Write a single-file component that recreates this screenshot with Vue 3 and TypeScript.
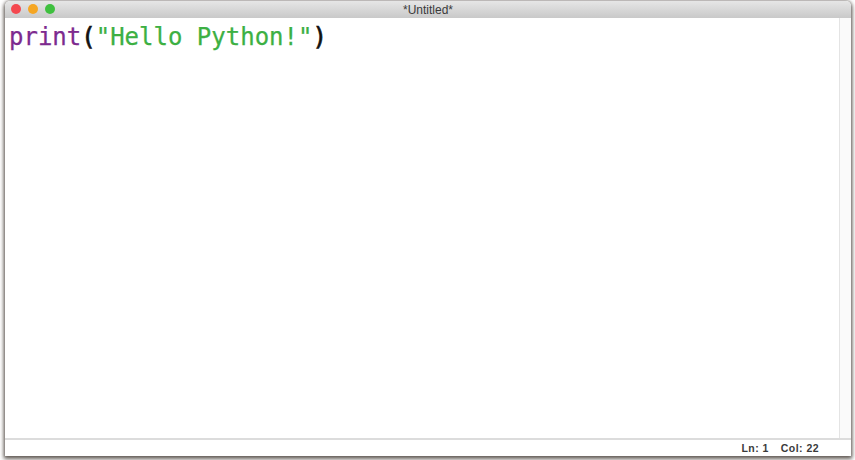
<script setup lang="ts">
const title: string = '*Untitled*'
const lights: string[] = ['#f4484f', '#f5a623', '#3fc03f']
</script>

<template>
  <div class="stage">
    <div class="window">
      <header class="titlebar">
        <div class="lights">
          <span v-for="c in lights" :key="c" class="light" :style="{ background: c }"></span>
        </div>
        <span class="title">{{ title }}</span>
      </header>
      <main class="body">
        <div class="editor">
          <code class="code"><span class="fn">print</span><span class="paren">(</span><span class="str">"Hello Python!"</span><span class="paren">)</span></code>
        </div>
        <div class="scroll"></div>
      </main>
      <footer class="status">
        <span>Ln: 1</span>
        <span>Col: 22</span>
      </footer>
    </div>
  </div>
</template>

<style>
html, body { margin: 0; background: #fff; overflow: hidden; }
</style>

<style scoped>
.stage {
  width: 855px;
  height: 460px;
  box-sizing: border-box;
  padding: 1px 4px 4px 5px;
  background: #fff;
  font-family: "Liberation Sans", Arial, sans-serif;
}
.window {
  height: 100%;
  display: flex;
  flex-direction: column;
  border-radius: 5px 5px 0 0;
  overflow: hidden;
  background: #fff;
  box-shadow: 0 2px 4px 1px rgba(70, 62, 56, 0.8), 0 0 3px 1px rgba(90, 84, 78, 0.35);
}
.titlebar {
  height: 17px;
  flex: none;
  display: flex;
  align-items: center;
  justify-content: center;
  position: relative;
  background: linear-gradient(#e6e6e6, #c9c9c9);
}
.lights {
  position: absolute;
  left: 6px;
  top: 3px;
  display: flex;
  gap: 7px;
}
.light {
  width: 10px;
  height: 10px;
  border-radius: 50%;
}
.title {
  font-size: 12px;
  color: #3a3a3a;
}
.body {
  flex: 1;
  display: flex;
  min-height: 0;
}
.editor {
  flex: 1;
  padding: 4px 4px;
}
.code {
  font-family: "DejaVu Sans Mono", monospace;
  font-size: 24px;
  line-height: 30px;
  display: block;
  -webkit-text-stroke: 0.25px currentColor;
}
.fn { color: #7d2a8f; }
.paren { color: #111; -webkit-text-stroke: 0.7px currentColor; }
.str { color: #3cb043; }
.scroll {
  width: 11px;
  flex: none;
  background: #fafafa;
  border-left: 1px solid #e4e4e4;
}
.status {
  height: 16px;
  flex: none;
  display: flex;
  justify-content: flex-end;
  align-items: center;
  gap: 12px;
  padding-right: 32px;
  border-top: 2px solid #dcdcdc;
  font-size: 10.5px;
  font-weight: 700;
  color: #3a3a3a;
  letter-spacing: 0.45px;
}
</style>
